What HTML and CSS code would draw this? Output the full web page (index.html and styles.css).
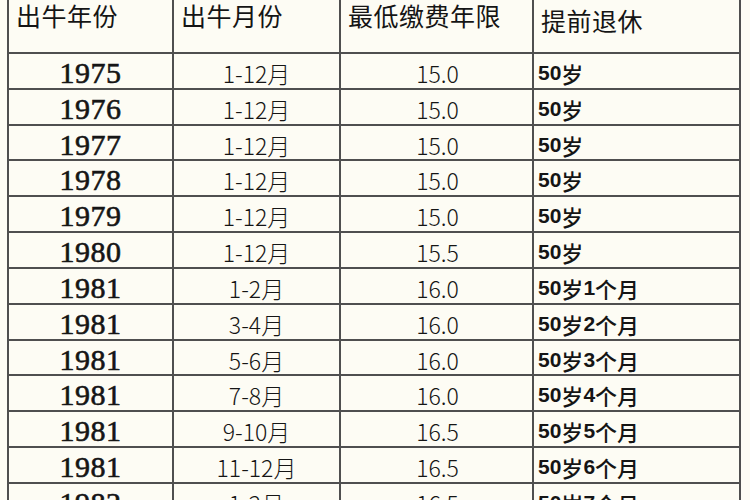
FILE: index.html
```html
<!DOCTYPE html>
<html lang="zh-CN">
<head>
<meta charset="utf-8">
<title>提前退休表</title>
<link rel="stylesheet" href="styles.css">
</head>
<body>
<div class="sheet">
  <div class="hd">出牛年份</div>
  <div class="hd">出牛月份</div>
  <div class="hd">最低缴费年限</div>
  <div class="hd hd-last">提前退休</div>

  <div class="c yr">1975</div><div class="c mo">1-12月</div><div class="c num">15.0</div><div class="c ret"><b>50</b>岁</div>
  <div class="c yr">1976</div><div class="c mo">1-12月</div><div class="c num">15.0</div><div class="c ret"><b>50</b>岁</div>
  <div class="c yr">1977</div><div class="c mo">1-12月</div><div class="c num">15.0</div><div class="c ret"><b>50</b>岁</div>
  <div class="c yr">1978</div><div class="c mo">1-12月</div><div class="c num">15.0</div><div class="c ret"><b>50</b>岁</div>
  <div class="c yr">1979</div><div class="c mo">1-12月</div><div class="c num">15.0</div><div class="c ret"><b>50</b>岁</div>
  <div class="c yr">1980</div><div class="c mo">1-12月</div><div class="c num">15.5</div><div class="c ret"><b>50</b>岁</div>
  <div class="c yr">1981</div><div class="c mo">1-2月</div><div class="c num">16.0</div><div class="c ret"><b>50</b>岁<b>1</b>个月</div>
  <div class="c yr">1981</div><div class="c mo">3-4月</div><div class="c num">16.0</div><div class="c ret"><b>50</b>岁<b>2</b>个月</div>
  <div class="c yr">1981</div><div class="c mo">5-6月</div><div class="c num">16.0</div><div class="c ret"><b>50</b>岁<b>3</b>个月</div>
  <div class="c yr">1981</div><div class="c mo">7-8月</div><div class="c num">16.0</div><div class="c ret"><b>50</b>岁<b>4</b>个月</div>
  <div class="c yr">1981</div><div class="c mo">9-10月</div><div class="c num">16.5</div><div class="c ret"><b>50</b>岁<b>5</b>个月</div>
  <div class="c yr">1981</div><div class="c mo">11-12月</div><div class="c num">16.5</div><div class="c ret"><b>50</b>岁<b>6</b>个月</div>
  <div class="c yr">1982</div><div class="c mo">1-2月</div><div class="c num">16.5</div><div class="c ret"><b>50</b>岁<b>7</b>个月</div>
</div>
</body>
</html>
```
FILE: styles.css
```css
html, body {
  margin: 0;
  padding: 0;
  background: #fdfcf4;
}

.sheet {
  display: grid;
  grid-template-columns: 163px 165px 191px 205px;
  grid-template-rows: 52px repeat(13, 33.83px);
  gap: 2px;
  padding: 0 2px 2px 2px;
  margin: 0 0 0 7px;
  width: max-content;
  background: #4f4f4f;
}

.sheet > div {
  background: #fdfcf4;
  color: #151515;
  white-space: nowrap;
}

.hd {
  font-family: "Noto Sans CJK SC", sans-serif;
  font-weight: 400;
  font-size: 25px;
  line-height: 26px;
  color: #2a2a2a;
  padding: 2px 0 0 7px;
  letter-spacing: 0.5px;
}

.hd-last {
  padding-top: 7px;
}

.c {
  display: flex;
  align-items: center;
  padding-top: 4px;
  box-sizing: border-box;
}

.yr {
  justify-content: center;
  font-family: "Liberation Serif", serif;
  font-weight: 400;
  font-size: 30px;
  letter-spacing: 0.5px;
  -webkit-text-stroke: 0.6px #151515;
}

.mo, .num {
  justify-content: center;
  font-family: "Noto Sans CJK SC", sans-serif;
  font-weight: 300;
  font-size: 23px;
  color: #1c1c1c;
}

.num {
  padding-left: 2px;
}

.ret {
  justify-content: flex-start;
  padding-left: 4px;
  font-family: "Noto Sans CJK SC", sans-serif;
  font-weight: 500;
  font-size: 22px;
}

.ret b {
  font-family: "Liberation Sans", sans-serif;
  font-weight: 700;
  font-size: 21px;
}
```
